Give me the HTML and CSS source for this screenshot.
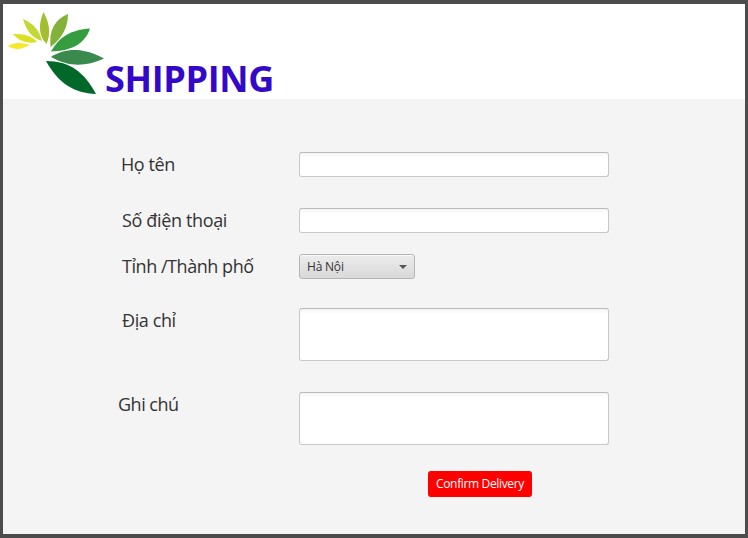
FILE: index.html
```
<!DOCTYPE html>
<html lang="vi">
<head>
<meta charset="utf-8">
<title>Shipping</title>
<link rel="stylesheet" href="styles.css">
</head>
<body>
<div class="window">
  <header class="header">
    <svg class="logo" width="104" height="91" viewBox="3 4 104 91" aria-hidden="true">
      <path fill="#f5e92b" d="M8 46Q12 43 19 43Q25 43 30 45Q22 49 18 49Q12 49 8 46Z"/>
      <path fill="#dce022" d="M13 34Q30 33 37 42Q22 45 13 34Z"/>
      <path fill="#c3d830" d="M23 19Q38 25 42 41Q28 37 23 19Z"/>
      <path fill="#a3bf31" d="M43.500 12Q53 29 46.500 44Q35 32 43.500 12Z"/>
      <path fill="#83b239" d="M68 14Q68 34 50.500 47Q48 22 68 14Z"/>
      <path fill="#369c40" d="M90 28.500C85 44 71 51 51 51.500C60 36 71 30 90 28.500Z"/>
      <path fill="#3a8a4d" d="M51 57C65 48 83 47 104 58.500C85 67 69 67 51 57Z"/>
      <path fill="#02682a" d="M46 61C70 61 84 72 96 94C74 93 59 84 46 61Z"/>
    </svg>
    <h1 class="title">SHIPPING</h1>
  </header>
  <main class="form">
    <label class="label name" for="name">Họ tên</label>
    <input class="field" id="name" type="text">
    <label class="label phone" for="phone">Số điện thoại</label>
    <input class="field" id="phone" type="text">
    <label class="label city" for="city">Tỉnh /Thành phố</label>
    <button class="combo" id="city" type="button"><span class="value">Hà Nội</span><span class="arrow"></span></button>
    <label class="label address" for="address">Địa chỉ</label>
    <textarea class="field" id="address"></textarea>
    <label class="label note" for="note">Ghi chú</label>
    <textarea class="field" id="note"></textarea>
    <button class="confirm" type="button"><span class="caption">Confirm Delivery</span></button>
  </main>
</div>
</body>
</html>
```
FILE: styles.css
```
* { box-sizing: border-box; }
body {
  margin: 0;
  font-family: "Open Sans", "Noto Sans", sans-serif;
}
.window {
  width: 748px;
  height: 538px;
  border: solid #4c4c4c;
  border-width: 4px 3px;
  background: #f4f4f4;
  overflow: hidden;
}
.header {
  display: flex;
  height: 95px;
  background: #fff;
}
.logo { display: block; flex: none; }
.title {
  margin: 50px 0 0 -2px;
  color: #3408c8;
  font-size: 36px;
  font-weight: 700;
  line-height: 50px;
  letter-spacing: -0.35px;
}
.form {
  display: grid;
  grid-template-columns: 181px 310px;
  grid-template-rows: 56px 46px 54px 84px 79px 26px;
  align-items: start;
  padding: 53px 0 0 115px;
}
.label {
  justify-self: start;
  margin-left: 4px;
  color: #333;
  font-size: 18px;
  line-height: 25px;
  white-space: nowrap;
}
.name { margin-left: 3px; letter-spacing: -0.4px; }
.phone { letter-spacing: -0.35px; }
.city { letter-spacing: -0.45px; }
.address { letter-spacing: -0.4px; }
.note { margin-left: 0; letter-spacing: -0.5px; }
.field {
  display: block;
  width: 310px;
  height: 25px;
  margin: 0;
  padding: 4px 7px;
  border: 1px solid #c8c8c8;
  border-top-color: #b9b9b9;
  border-radius: 3px;
  background: linear-gradient(#f4f4f4, #fff 5px);
  font: 12px "Open Sans", sans-serif;
  outline: 0;
  resize: none;
}
textarea.field { height: 53px; }
.combo {
  display: flex;
  align-items: center;
  justify-content: space-between;
  width: 116px;
  height: 25px;
  padding: 0 7px;
  border: 1px solid #b5b5b5;
  border-radius: 3px;
  background: linear-gradient(#ececec, #d9d9d9);
  box-shadow: inset 0 1px #f8f8f8;
  color: #333;
  font: 12px/16px "Open Sans", sans-serif;
}
.value { letter-spacing: -0.2px; }
.arrow {
  border: solid transparent;
  border-width: 4px 4px 0;
  border-top-color: #555;
}
.confirm {
  grid-column: 2;
  width: 104px;
  height: 26px;
  margin-left: 129px;
  padding: 0;
  border: 0;
  border-radius: 3px;
  background: #f00;
  color: #fff;
  font: 12px/26px "Open Sans", sans-serif;
  white-space: nowrap;
}
.caption { letter-spacing: -0.35px; }
```
